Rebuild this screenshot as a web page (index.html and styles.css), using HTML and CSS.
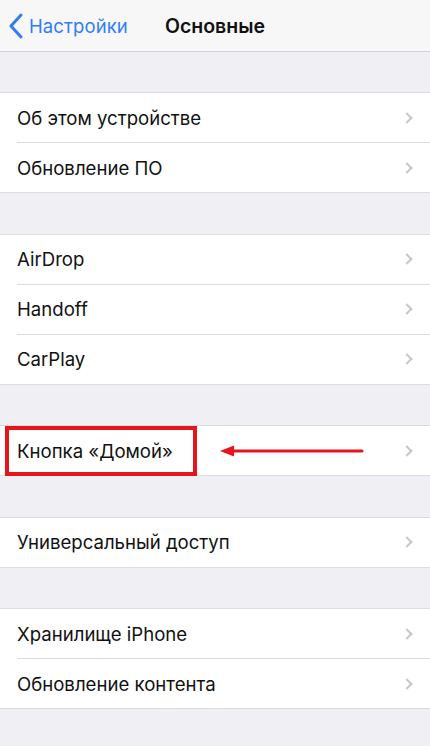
FILE: index.html
```html
<!DOCTYPE html>
<html lang="ru">
<head>
<meta charset="utf-8">
<title>Основные</title>
<link rel="stylesheet" href="styles.css">
</head>
<body>
<header class="navbar">
  <a class="back">
    <svg class="back-icon" width="16" height="26" viewBox="0 0 16 26"><path d="M13 2 L3 13 L13 24" fill="none" stroke="#2f7df6" stroke-width="3" stroke-linecap="round" stroke-linejoin="round"/></svg>
    <span>Настройки</span>
  </a>
  <h1 class="title">Основные</h1>
</header>

<main class="content">
  <section class="group">
    <div class="row"><span class="label">Об этом устройстве</span><span class="chev"></span></div>
    <div class="row"><span class="label">Обновление ПО</span><span class="chev"></span></div>
  </section>

  <section class="group">
    <div class="row"><span class="label">AirDrop</span><span class="chev"></span></div>
    <div class="row"><span class="label">Handoff</span><span class="chev"></span></div>
    <div class="row"><span class="label">CarPlay</span><span class="chev"></span></div>
  </section>

  <section class="group">
    <div class="row highlighted">
      <span class="label">Кнопка «Домой»</span><span class="chev"></span>
      <span class="mark-box"></span>
      <svg class="mark-arrow" width="148" height="14" viewBox="0 0 148 14"><path d="M14 7 H144" stroke="#e8141b" stroke-width="3" stroke-linecap="round"/><path d="M2 7 L16 1.5 L16 12.5 Z" fill="#e8141b"/></svg>
    </div>
  </section>

  <section class="group">
    <div class="row"><span class="label">Универсальный доступ</span><span class="chev"></span></div>
  </section>

  <section class="group">
    <div class="row"><span class="label">Хранилище iPhone</span><span class="chev"></span></div>
    <div class="row"><span class="label">Обновление контента</span><span class="chev"></span></div>
  </section>
</main>
</body>
</html>
```

FILE: styles.css
```css
* { box-sizing: border-box; }
html, body { margin: 0; padding: 0; }
body {
  width: 430px;
  height: 746px;
  overflow: hidden;
  background: #efeff4;
  font-family: Inter, "Noto Sans", sans-serif;
  color: #111;
}
.navbar {
  height: 52px;
  background: #f7f7f7;
  border-bottom: 1px solid #d3d3d8;
  display: flex;
  align-items: center;
  position: relative;
}
.back {
  display: flex;
  align-items: center;
  gap: 5px;
  padding-left: 8px;
  color: #2f7df6;
  font-size: 18.5px;
  letter-spacing: 0.1px;
}
.back-icon { display: block; margin-top: 1px; }
.title {
  position: absolute;
  left: 0;
  right: 0;
  top: 0;
  height: 51px;
  margin: 0;
  display: flex;
  align-items: center;
  justify-content: center;
  font-size: 19.5px;
  font-weight: 600;
  pointer-events: none;
}
.content {
  display: flex;
  flex-direction: column;
  gap: 40.5px;
  padding-top: 40px;
}
.group {
  background: #fff;
  border-top: 1px solid #dcdce0;
  border-bottom: 1px solid #dcdce0;
  padding-left: 17px;
}
.row {
  height: 49px;
  display: flex;
  align-items: center;
  justify-content: space-between;
  padding-right: 19px;
  position: relative;
}
.row + .row { border-top: 1px solid #dcdce0; height: 50px; }
.label {
  font-size: 18.6px;
  color: #111;
}
.chev {
  width: 8px;
  height: 8px;
  border-top: 2px solid #c7c7cc;
  border-right: 2px solid #c7c7cc;
  transform: rotate(45deg);
}
.mark-box {
  position: absolute;
  left: -12px;
  top: 0;
  width: 192px;
  height: 50px;
  border: 4px solid #e8141b;
}
.mark-arrow {
  position: absolute;
  left: 201px;
  top: 18px;
}
```
